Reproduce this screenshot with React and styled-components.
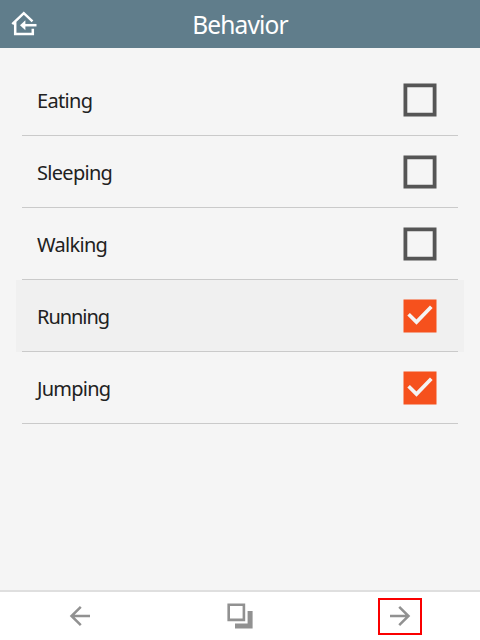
import React, { useState } from "react";
import styled, { createGlobalStyle } from "styled-components";

const GlobalStyle = createGlobalStyle`
  * { box-sizing: border-box; }
  body { margin: 0; background: #f5f5f5; }
`;

const Screen = styled.div`
  display: flex;
  flex-direction: column;
  width: 480px;
  height: 640px;
  overflow: hidden;
  background: #f5f5f5;
  color: #212121;
  font-family: "Noto Sans", sans-serif;
`;

const Header = styled.header`
  display: grid;
  grid-template-columns: 48px 1fr 48px;
  align-items: center;
  height: 48px;
  flex: none;
  background: #607d8b;
  color: #fff;
`;

const Title = styled.h1`
  margin: 0;
  padding-top: 2px;
  text-align: center;
  font-size: 24.5px;
  line-height: 46px;
  font-weight: 400;
  letter-spacing: -0.85px;
`;

const IconButton = styled.button`
  display: flex;
  padding: 0;
  border: 0;
  background: none;
  color: inherit;
`;

const List = styled.ul`
  flex: 1;
  margin: 0;
  padding: 16px 16px 0;
  list-style: none;
`;

const Row = styled.li`
  height: 72px;
  padding: 0 6px;
  background: ${(p) => (p.$active ? "#f0f0f0" : "transparent")};
`;

const RowBody = styled.label`
  display: flex;
  align-items: center;
  justify-content: space-between;
  height: 72px;
  padding: 0 20px 0 15px;
  border-bottom: 1px solid #cacaca;
`;

const Name = styled.span`
  padding-top: 2px;
  font-size: 20px;
  line-height: 28px;
  letter-spacing: ${(p) => p.$tracking}px;
`;

const Toolbar = styled.nav`
  display: grid;
  grid-template-columns: repeat(3, 1fr);
  justify-items: center;
  height: 50px;
  flex: none;
  padding-top: 6px;
  border-top: 2px solid #dfdfdf;
  background: #fff;
`;

const Tool = styled.button`
  display: flex;
  align-items: center;
  justify-content: center;
  width: 44px;
  height: 37px;
  padding: 0 0 1px;
  border: 2px solid ${(p) => (p.$marked ? "#fa0000" : "transparent")};
  background: none;
  color: #919191;
`;

const HomeIcon = () => (
  <svg width="48" height="48" fill="none" stroke="currentColor" strokeWidth="2.5">
    <path d="M12.3 24.2 23.8 13.2 32.5 21.3M15.2 22v12h17.6v-5.2" />
    <path d="M36.5 25.2H22" />
    <path d="M20 25.2l5.4-5v10z" fill="currentColor" stroke="none" />
  </svg>
);

const CheckIcon = ({ checked }) => (
  <svg width="36" height="36" fill="none">
    {checked ? (
      <>
        <path d="M1.5 1.5h33v33h-33z" fill="#f6511d" />
        <path d="m6.6 16.2 7.9 7.8 14.8-15.2" stroke="#f4f4f4" strokeWidth="3.7" />
      </>
    ) : (
      <path d="M3.4 3.4h29.2v29.2H3.4z" stroke="#555" strokeWidth="3.8" />
    )}
  </svg>
);

const ArrowIcon = ({ back }) => (
  <svg width="24" height="24" fill="none" stroke="currentColor" strokeWidth="2.5">
    <path
      d={
        back
          ? "M22 12H3.5M12.8 2.8 3.5 12l9.3 9.2"
          : "M2 12h18.5M11.2 2.8 20.5 12l-9.3 9.2"
      }
    />
  </svg>
);

const StackIcon = () => (
  <svg width="28" height="28" fill="none" stroke="currentColor">
    <path d="M2.7 2.7h15.2v15.2H2.7z" strokeWidth="2.6" />
    <path d="M9 24h15.1V9" strokeWidth="5" />
  </svg>
);

const behaviors = [
  { name: "Eating", tracking: -0.65 },
  { name: "Sleeping", tracking: -0.7 },
  { name: "Walking", tracking: -0.7 },
  { name: "Running", tracking: -1.05 },
  { name: "Jumping", tracking: -0.75 },
];

export default function App() {
  const [checked] = useState(["Running", "Jumping"]);
  return (
    <>
      <GlobalStyle />
      <Screen>
        <Header>
          <IconButton aria-label="Home"><HomeIcon /></IconButton>
          <Title>Behavior</Title>
        </Header>
        <List>
          {behaviors.map(({ name, tracking }) => (
            <Row key={name} $active={name === "Running"}>
              <RowBody>
                <Name $tracking={tracking}>{name}</Name>
                <CheckIcon checked={checked.includes(name)} />
              </RowBody>
            </Row>
          ))}
        </List>
        <Toolbar>
          <Tool aria-label="Previous"><ArrowIcon back /></Tool>
          <Tool aria-label="Pages"><StackIcon /></Tool>
          <Tool aria-label="Next" $marked><ArrowIcon /></Tool>
        </Toolbar>
      </Screen>
    </>
  );
}
